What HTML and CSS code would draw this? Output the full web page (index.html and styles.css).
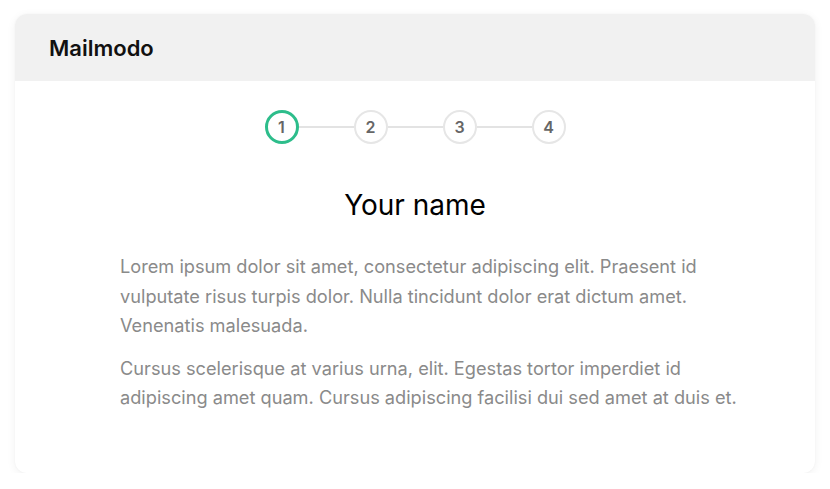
FILE: index.html
```html
<!DOCTYPE html>
<html>
<head>
<meta charset="utf-8">
<link rel="stylesheet" href="styles.css">
</head>
<body>
<div class="card">
  <div class="card-header">Mailmodo</div>
  <div class="card-body">
    <div class="stepper">
      <div class="step active">1</div>
      <div class="line"></div>
      <div class="step">2</div>
      <div class="line"></div>
      <div class="step">3</div>
      <div class="line"></div>
      <div class="step">4</div>
    </div>
    <h1 class="title">Your name</h1>
    <div class="text">
      <p>Lorem ipsum dolor sit amet, consectetur adipiscing elit. Praesent id vulputate risus turpis dolor. Nulla tincidunt dolor erat dictum amet. Venenatis malesuada.</p>
      <p>Cursus scelerisque at varius urna, elit. Egestas tortor imperdiet id adipiscing amet quam. Cursus adipiscing facilisi dui sed amet at duis et.</p>
    </div>
  </div>
</div>
</body>
</html>
```
FILE: styles.css
```css
* { box-sizing: border-box; }
html, body { margin: 0; padding: 0; background: #fff; }
body {
  font-family: Inter, "Noto Sans", sans-serif;
  padding: 14px 15px 0 15px;
}
.card {
  width: 800px;
  height: 459px;
  border-radius: 12px;
  background: #fff;
  box-shadow: 0 2px 10px rgba(0,0,0,0.06), 0 0 2px rgba(0,0,0,0.04);
  overflow: hidden;
}
.card-header {
  height: 67px;
  background: #f1f1f1;
  display: flex;
  align-items: center;
  padding-left: 34px;
  font-size: 22px;
  font-weight: 600;
  color: #111;
}
.card-body {
  padding: 29px 70px 0 105px;
}
.stepper {
  display: flex;
  align-items: center;
  justify-content: center;
  margin-left: -35px;
}
.step {
  width: 34px;
  height: 34px;
  border-radius: 50%;
  border: 2px solid #e6e6e6;
  display: flex;
  align-items: center;
  justify-content: center;
  font-size: 16px;
  font-weight: 600;
  color: #666;
}
.step.active {
  border: 3px solid #2dbd8b;
}
.line {
  width: 55px;
  height: 2px;
  background: #e3e3e3;
}
.title {
  margin: 42px 0 0 -35px;
  text-align: center;
  font-size: 28px;
  font-weight: 400;
  color: #000;
  line-height: 38px;
}
.text {
  margin-top: 28px;
}
.text p {
  margin: 0 0 13px 0;
  font-size: 18.2px;
  line-height: 29.5px;
  color: #8a8a8a;
}
```
